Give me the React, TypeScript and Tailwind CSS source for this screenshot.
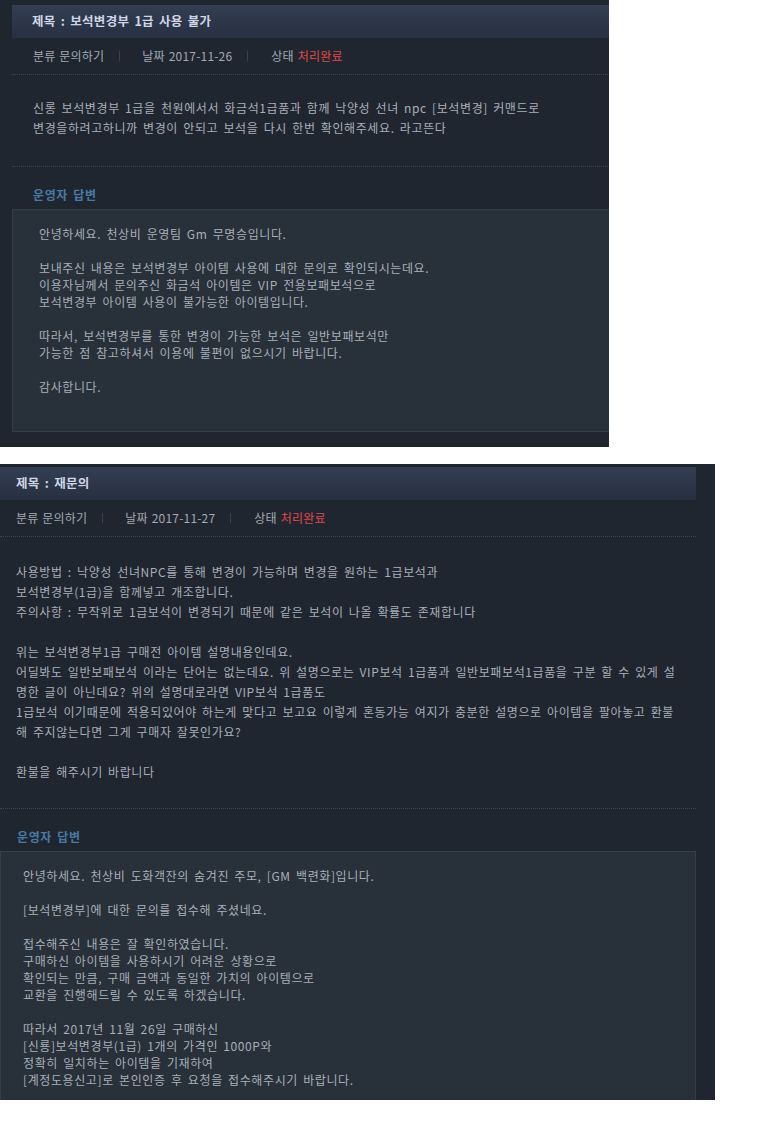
const font = "font-['Noto_Sans_CJK_KR','Noto_Sans_CJK_JP',sans-serif]";

type Ticket = {
  title: string;
  date: string;
  body: string[];
  answer: string[];
};

const first: Ticket = {
  title: "제목 : 보석변경부 1급 사용 불가",
  date: "2017-11-26",
  body: [
    "신롱 보석변경부 1급을 천원에서서 화금석1급품과 함께 낙양성 선녀 npc [보석변경] 커맨드로",
    "변경을하려고하니까 변경이 안되고 보석을 다시 한번 확인해주세요. 라고뜬다",
  ],
  answer: [
    "안녕하세요. 천상비 운영팀 Gm 무명승입니다.",
    "",
    "보내주신 내용은 보석변경부 아이템 사용에 대한 문의로 확인되시는데요.",
    "이용자님께서 문의주신 화금석 아이템은 VIP 전용보패보석으로",
    "보석변경부 아이템 사용이 불가능한 아이템입니다.",
    "",
    "따라서, 보석변경부를 통한 변경이 가능한 보석은 일반보패보석만",
    "가능한 점 참고하셔서 이용에 불편이 없으시기 바랍니다.",
    "",
    "감사합니다.",
  ],
};

const second: Ticket = {
  title: "제목 : 재문의",
  date: "2017-11-27",
  body: [
    "사용방법 : 낙양성 선녀NPC를 통해 변경이 가능하며 변경을 원하는 1급보석과",
    "보석변경부(1급)을 함께넣고 개조합니다.",
    "주의사항 : 무작위로 1급보석이 변경되기 때문에 같은 보석이 나올 확률도 존재합니다",
    "",
    "위는 보석변경부1급 구매전 아이템 설명내용인데요.",
    "어딜봐도 일반보패보석 이라는 단어는 없는데요. 위 설명으로는 VIP보석 1급품과 일반보패보석1급품을 구분 할 수 있게 설",
    "명한 글이 아닌데요? 위의 설명대로라면 VIP보석 1급품도",
    "1급보석 이기때문에 적용되있어야 하는게 맞다고 보고요 이렇게 혼동가능 여지가 충분한 설명으로 아이템을 팔아놓고 환불",
    "해 주지않는다면 그게 구매자 잘못인가요?",
    "",
    "환불을 해주시기 바랍니다",
  ],
  answer: [
    "안녕하세요. 천상비 도화객잔의 숨겨진 주모, [GM 백련화]입니다.",
    "",
    "[보석변경부]에 대한 문의를 접수해 주셨네요.",
    "",
    "접수해주신 내용은 잘 확인하였습니다.",
    "구매하신 아이템을 사용하시기 어려운 상황으로",
    "확인되는 만큼, 구매 금액과 동일한 가치의 아이템으로",
    "교환을 진행해드릴 수 있도록 하겠습니다.",
    "",
    "따라서 2017년 11월 26일 구매하신",
    "[신룡]보석변경부(1급) 1개의 가격인 1000P와",
    "정확히 일치하는 아이템을 기재하여",
    "[계정도용신고]로 본인인증 후 요청을 접수해주시기 바랍니다.",
  ],
};

function Lines({ lines, className }: { lines: string[]; className: string }) {
  return (
    <div className={className}>
      {lines.map((l, i) => (
        <div key={i} className="whitespace-pre">
          {l || "\u00a0"}
        </div>
      ))}
    </div>
  );
}

function Sep() {
  return <span className="h-[10px] w-px bg-[#3a424e]" />;
}

function TicketView({ t, second }: { t: Ticket; second?: boolean }) {
  return (
    <div className={`tracking-[0.6px] [word-spacing:2px] ${second ? "w-[696px]" : "ml-[12px] w-[640px]"}`}>
      <div className="flex h-[33px] items-center bg-gradient-to-b from-[#333e52] to-[#273041] pl-[16px] text-[12.5px] font-bold tracking-[0.3px] text-[#cfd6e6]">
        <span className={second ? "" : "pl-[4px]"}>{t.title}</span>
      </div>
      <div
        className={`flex h-[37px] items-center border-b border-dotted border-[#3b4451] text-[12px] tracking-[0.2px] text-[#a3a9b3] [word-spacing:1px] ${
          second ? "pl-[16px]" : "pl-[21px]"
        }`}
      >
        <span>분류 문의하기</span>
        <span className="ml-[15px] mr-[22px] flex items-center">
          <Sep />
        </span>
        <span>날짜 {t.date}</span>
        <span className="ml-[15px] mr-[23px] flex items-center">
          <Sep />
        </span>
        <span>
          상태 <span className="text-[#e2484a]">처리완료</span>
        </span>
      </div>
      <Lines
        lines={t.body}
        className={`border-b border-dotted border-[#3b4451] text-[12px] leading-[20px] text-[#a9afb8] ${
          second ? "pb-[26px] pl-[16px] pt-[25px]" : "pb-[28px] pl-[21px] pt-[23px]"
        }`}
      />
      <div
        className={`pt-[18px] text-[12px] font-bold leading-[20px] text-[#4a7aa3] ${
          second ? "pl-[17px]" : "pl-[21px]"
        }`}
      >
        운영자 답변
      </div>
      <div
        className={`mt-[4px] border border-[#353d49] bg-[#28303a] pt-[15px] ${
          second ? "w-[696px] pb-[20px] pl-[22px]" : "pb-[36px] pl-[26px]"
        }`}
      >
        <Lines lines={t.answer} className="text-[12px] leading-[17px] text-[#a9afb8]" />
      </div>
    </div>
  );
}

export default function App() {
  return (
    <div className={`min-h-[1122px] w-[758px] bg-white ${font}`}>
      <div className="h-[447px] w-[609px] overflow-hidden bg-[#1f2630] pt-[5px]">
        <TicketView t={first} />
      </div>
      <div className="mt-[17px] h-[636px] w-[715px] overflow-hidden bg-[#1f2630] pt-[3px]">
        <TicketView t={second} second />
      </div>
    </div>
  );
}
